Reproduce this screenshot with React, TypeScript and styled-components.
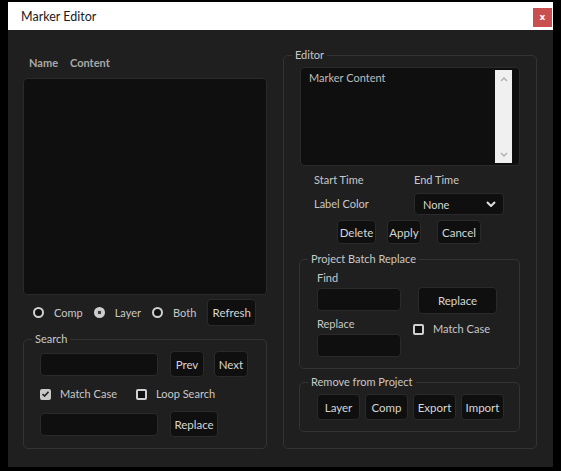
import React, { FC } from 'react';
import styled, { createGlobalStyle } from 'styled-components';

const colors = {
  page: '#000000',
  body: '#1f1f1f',
  field: '#0f0f0f',
  line: '#333333',
  fieldLine: '#2a2a2a',
  text: '#c8c8c8',
  head: '#a9a9a9',
  close: '#c9504e',
};

const GlobalStyle = createGlobalStyle`
  html, body {
    margin: 0;
    padding: 0;
    background: ${colors.page};
  }
  body {
    font-family: Lato, "Open Sans", "Liberation Sans", sans-serif;
    font-size: 11px;
    color: ${colors.text};
  }
`;

const Window = styled.div`
  width: 545px;
  margin: 2px 8px 0;
`;

const TitleBar = styled.div`
  height: 28px;
  background: #ffffff;
  display: flex;
  justify-content: space-between;
  padding: 0 1px 0 13px;
  box-sizing: border-box;
`;

const Title = styled.span`
  align-self: center;
  color: #1a1a1a;
  font-size: 12.5px;
`;

const Close = styled.button`
  margin-top: 6px;
  width: 19px;
  height: 19px;
  border: 0;
  padding: 0;
  background: ${colors.close};
  color: #fff;
  font-family: "DejaVu Sans", sans-serif;
  font-weight: bold;
  font-size: 9px;
  line-height: 19px;
`;

const Body = styled.div`
  height: 437px;
  background: ${colors.body};
  display: flex;
  gap: 16px;
  padding: 17px 16px 0 15px;
  box-sizing: border-box;
`;

const LeftColumn = styled.div`
  width: 244px;
  display: flex;
  flex-direction: column;
`;

const ListHeader = styled.div`
  display: flex;
  gap: 12px;
  margin: 8px 0 7px 6px;
  line-height: 16px;
  font-weight: bold;
  color: ${colors.head};
`;

const List = styled.div`
  height: 217px;
  background: ${colors.field};
  border: 1px solid ${colors.fieldLine};
  border-radius: 4px;
  box-sizing: border-box;
`;

const RadioRow = styled.div`
  display: flex;
  align-items: center;
  margin: 4px 0 0 10px;
  height: 27px;
`;

const Choice = styled.label`
  display: flex;
  align-items: center;
  gap: 10px;
  margin-right: 11px;
`;

const Radio = styled.span<{ $on?: boolean }>`
  width: 11px;
  height: 11px;
  border-radius: 50%;
  box-sizing: border-box;
  border: 2px solid #d0d0d0;
  background: ${(p) => (p.$on ? 'radial-gradient(circle, #3a3a3a 0 1.5px, #c8c8c8 2px)' : '#111')};
`;

const Box = styled.span<{ $on?: boolean }>`
  width: 11px;
  height: 11px;
  border-radius: 2px;
  box-sizing: border-box;
  display: flex;
  align-items: center;
  justify-content: center;
  border: 2px solid ${(p) => (p.$on ? '#c8c8c8' : '#d0d0d0')};
  background: ${(p) => (p.$on ? '#c8c8c8' : '#111')};
`;

const Button = styled.button<{ $w: number; $h?: number }>`
  width: ${(p) => p.$w}px;
  height: ${(p) => p.$h ?? 26}px;
  padding: 0;
  background: ${colors.field};
  border: 1px solid ${colors.fieldLine};
  border-radius: 4px;
  color: #d6d6d6;
  font-family: inherit;
  font-size: 11.5px;
  flex-shrink: 0;
`;

const Input = styled.div<{ $w: number }>`
  width: ${(p) => p.$w}px;
  height: 23px;
  background: ${colors.field};
  border: 1px solid ${colors.fieldLine};
  border-radius: 4px;
  box-sizing: border-box;
  flex-shrink: 0;
`;

const Group = styled.fieldset`
  margin: 0;
  padding: 0;
  min-width: 0;
  border: 1px solid ${colors.line};
  border-radius: 5px;
`;

const SubGroup = styled(Group)<{ $top: number }>`
  margin: ${(p) => p.$top}px 0 0 15px;
  width: 221px;
  box-sizing: border-box;
`;

const Legend = styled.legend`
  margin-left: 8px;
  padding: 0 3px;
  line-height: 16px;
  font-size: 11px;
  color: ${colors.text};
`;

const GroupBody = styled.div<{ $pad: string }>`
  padding: ${(p) => p.$pad};
  display: flex;
  flex-direction: column;
`;

const Row = styled.div<{ $gap?: number; $top?: number; $left?: number }>`
  display: flex;
  align-items: center;
  gap: ${(p) => p.$gap ?? 0}px;
  margin-top: ${(p) => p.$top ?? 0}px;
  margin-left: ${(p) => p.$left ?? 0}px;
`;

const Check = styled.label`
  display: flex;
  align-items: center;
  gap: 9px;
  line-height: 16px;
`;

const RightColumn = styled.div`
  width: 254px;
  display: flex;
  flex-direction: column;
`;

const TextBox = styled.div`
  width: 220px;
  height: 99px;
  margin-left: 16px;
  background: ${colors.field};
  border: 1px solid ${colors.fieldLine};
  border-radius: 4px;
  box-sizing: border-box;
  display: flex;
  padding: 2px 7px 2px 8px;
`;

const TextContent = styled.div`
  flex: 1;
  line-height: 16px;
  color: #bdbdbd;
`;

const ScrollBar = styled.div`
  width: 17px;
  background: #f0f0f0;
  display: flex;
  flex-direction: column;
  justify-content: space-between;
  align-items: center;
  padding: 7px 0 6px;
  box-sizing: border-box;
`;

const Label = styled.span<{ $w?: number }>`
  display: inline-block;
  width: ${(p) => (p.$w ? `${p.$w}px` : 'auto')};
  line-height: 16px;
`;

const Select = styled.div`
  width: 90px;
  height: 22px;
  background: ${colors.field};
  border: 1px solid ${colors.fieldLine};
  border-radius: 4px;
  box-sizing: border-box;
  display: flex;
  align-items: center;
  justify-content: space-between;
  padding: 0 7px 0 8px;
  color: #d6d6d6;
`;

const Split = styled.div`
  display: flex;
  gap: 12px;
  padding-left: 17px;
`;

const Stack = styled.div<{ $top?: number }>`
  display: flex;
  flex-direction: column;
  padding-top: ${(p) => p.$top ?? 0}px;
`;

const Chevron: FC<{ up?: boolean; color: string; w: number; h: number; sw: number }> = ({ up, color, w, h, sw }) => (
  <svg width={w} height={h} viewBox={`0 0 ${w} ${h}`}>
    <path
      d={up ? `M1 ${h - 1} L${w / 2} 1 L${w - 1} ${h - 1}` : `M1 1 L${w / 2} ${h - 1} L${w - 1} 1`}
      fill="none"
      stroke={color}
      strokeWidth={sw}
    />
  </svg>
);

const Tick: FC = () => (
  <svg width="7" height="6" viewBox="0 0 7 6">
    <path d="M0.5 3 L2.6 5 L6.5 0.8" fill="none" stroke="#222" strokeWidth="1.6" />
  </svg>
);

const App: FC = () => (
  <>
    <GlobalStyle />
    <Window>
      <TitleBar>
        <Title>Marker Editor</Title>
        <Close>x</Close>
      </TitleBar>
      <Body>
        <LeftColumn>
          <ListHeader>
            <span>Name</span>
            <span>Content</span>
          </ListHeader>
          <List />
          <RadioRow>
            <Choice>
              <Radio />
              Comp
            </Choice>
            <Choice>
              <Radio $on />
              Layer
            </Choice>
            <Choice>
              <Radio />
              Both
            </Choice>
            <Button $w={49} $h={27}>Refresh</Button>
          </RadioRow>
          <Group style={{ marginTop: 5 }}>
            <Legend>Search</Legend>
            <GroupBody $pad="4px 0 11px 16px">
              <Row>
                <Input $w={118} />
                <Button $w={34} style={{ marginLeft: 12 }}>Prev</Button>
                <Button $w={34} style={{ marginLeft: 10 }}>Next</Button>
              </Row>
              <Row $top={9}>
                <Check>
                  <Box $on>
                    <Tick />
                  </Box>
                  Match Case
                </Check>
                <Check style={{ marginLeft: 19 }}>
                  <Box />
                  Loop Search
                </Check>
              </Row>
              <Row $top={9}>
                <Input $w={118} />
                <Button $w={48} style={{ marginLeft: 12 }}>Replace</Button>
              </Row>
            </GroupBody>
          </Group>
        </LeftColumn>

        <RightColumn>
          <Group>
            <Legend>Editor</Legend>
            <GroupBody $pad="4px 0 16px 0">
              <TextBox>
                <TextContent>Marker Content</TextContent>
                <ScrollBar>
                  <Chevron up color="#b4b4b4" w={8} h={5} sw={1.5} />
                  <Chevron color="#b4b4b4" w={8} h={5} sw={1.5} />
                </ScrollBar>
              </TextBox>
              <Row $top={6} $left={30}>
                <Label $w={100}>Start Time</Label>
                <Label>End Time</Label>
              </Row>
              <Row $top={5} $left={30}>
                <Label $w={100}>Label Color</Label>
                <Select>
                  None
                  <Chevron color="#e0e0e0" w={10} h={6} sw={2} />
                </Select>
              </Row>
              <Row $top={5} $left={53}>
                <Button $w={39} $h={24}>Delete</Button>
                <Button $w={34} $h={24} style={{ marginLeft: 11 }}>Apply</Button>
                <Button $w={44} $h={24} style={{ marginLeft: 16 }}>Cancel</Button>
              </Row>
              <SubGroup $top={7}>
                <Legend>Project Batch Replace</Legend>
                <GroupBody $pad="3px 0 11px 0">
                  <Split>
                    <Stack>
                      <Label>Find</Label>
                      <Input $w={84} style={{ marginTop: 2 }} />
                      <Label style={{ marginTop: 5 }}>Replace</Label>
                      <Input $w={84} style={{ marginTop: 2 }} />
                    </Stack>
                    <Stack $top={17}>
                      <Button $w={79} $h={27} style={{ marginLeft: 5 }}>Replace</Button>
                      <Check style={{ marginTop: 7 }}>
                        <Box />
                        Match Case
                      </Check>
                    </Stack>
                  </Split>
                </GroupBody>
              </SubGroup>
              <SubGroup $top={5}>
                <Legend>Remove from Project</Legend>
                <GroupBody $pad="4px 0 11px 17px">
                  <Row $gap={5}>
                    <Button $w={43}>Layer</Button>
                    <Button $w={43}>Comp</Button>
                    <Button $w={43}>Export</Button>
                    <Button $w={43}>Import</Button>
                  </Row>
                </GroupBody>
              </SubGroup>
            </GroupBody>
          </Group>
        </RightColumn>
      </Body>
    </Window>
  </>
);

export default App;
